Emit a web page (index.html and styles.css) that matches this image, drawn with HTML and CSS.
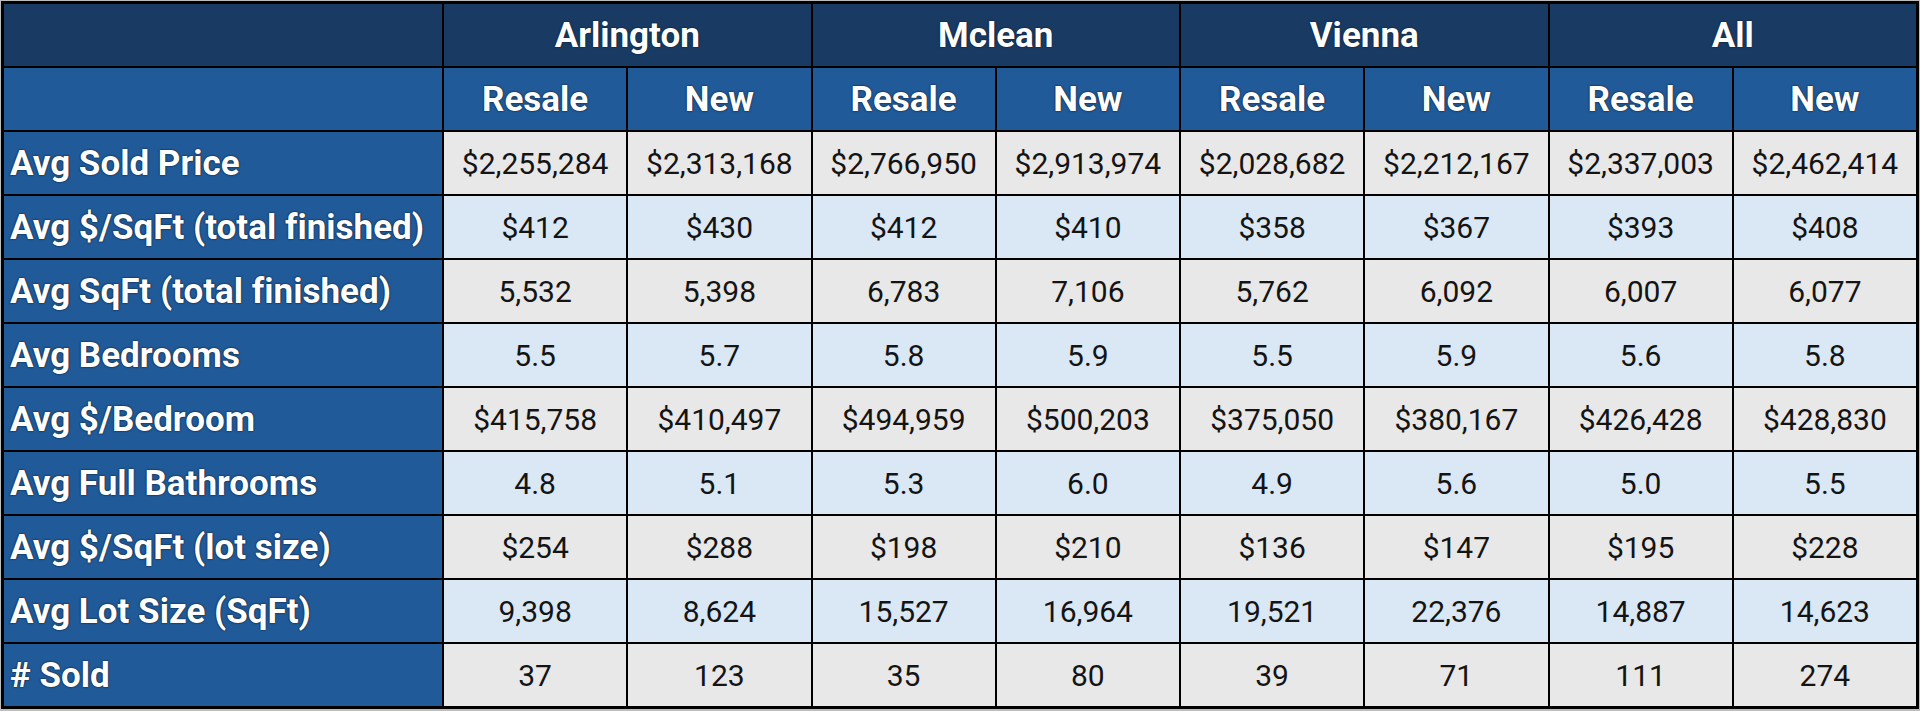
FILE: index.html
```html
<!DOCTYPE html>
<html lang="en">
<head>
<meta charset="utf-8">
<title>Home Sales Comparison</title>
<link rel="stylesheet" href="styles.css">
</head>
<body>
<div class="sheet">
  <div class="cell top corner"></div>
  <div class="cell top city">Arlington</div>
  <div class="cell top city">Mclean</div>
  <div class="cell top city">Vienna</div>
  <div class="cell top city">All</div>

  <div class="cell sub"></div>
  <div class="cell sub">Resale</div><div class="cell sub">New</div>
  <div class="cell sub">Resale</div><div class="cell sub">New</div>
  <div class="cell sub">Resale</div><div class="cell sub">New</div>
  <div class="cell sub">Resale</div><div class="cell sub">New</div>

  <div class="cell label">Avg Sold Price</div>
  <div class="cell d gray">$2,255,284</div><div class="cell d gray">$2,313,168</div>
  <div class="cell d gray">$2,766,950</div><div class="cell d gray">$2,913,974</div>
  <div class="cell d gray">$2,028,682</div><div class="cell d gray">$2,212,167</div>
  <div class="cell d gray">$2,337,003</div><div class="cell d gray">$2,462,414</div>

  <div class="cell label">Avg $/SqFt (total finished)</div>
  <div class="cell d blue">$412</div><div class="cell d blue">$430</div>
  <div class="cell d blue">$412</div><div class="cell d blue">$410</div>
  <div class="cell d blue">$358</div><div class="cell d blue">$367</div>
  <div class="cell d blue">$393</div><div class="cell d blue">$408</div>

  <div class="cell label">Avg SqFt (total finished)</div>
  <div class="cell d gray">5,532</div><div class="cell d gray">5,398</div>
  <div class="cell d gray">6,783</div><div class="cell d gray">7,106</div>
  <div class="cell d gray">5,762</div><div class="cell d gray">6,092</div>
  <div class="cell d gray">6,007</div><div class="cell d gray">6,077</div>

  <div class="cell label">Avg Bedrooms</div>
  <div class="cell d blue">5.5</div><div class="cell d blue">5.7</div>
  <div class="cell d blue">5.8</div><div class="cell d blue">5.9</div>
  <div class="cell d blue">5.5</div><div class="cell d blue">5.9</div>
  <div class="cell d blue">5.6</div><div class="cell d blue">5.8</div>

  <div class="cell label">Avg $/Bedroom</div>
  <div class="cell d gray">$415,758</div><div class="cell d gray">$410,497</div>
  <div class="cell d gray">$494,959</div><div class="cell d gray">$500,203</div>
  <div class="cell d gray">$375,050</div><div class="cell d gray">$380,167</div>
  <div class="cell d gray">$426,428</div><div class="cell d gray">$428,830</div>

  <div class="cell label">Avg Full Bathrooms</div>
  <div class="cell d blue">4.8</div><div class="cell d blue">5.1</div>
  <div class="cell d blue">5.3</div><div class="cell d blue">6.0</div>
  <div class="cell d blue">4.9</div><div class="cell d blue">5.6</div>
  <div class="cell d blue">5.0</div><div class="cell d blue">5.5</div>

  <div class="cell label">Avg $/SqFt (lot size)</div>
  <div class="cell d gray">$254</div><div class="cell d gray">$288</div>
  <div class="cell d gray">$198</div><div class="cell d gray">$210</div>
  <div class="cell d gray">$136</div><div class="cell d gray">$147</div>
  <div class="cell d gray">$195</div><div class="cell d gray">$228</div>

  <div class="cell label">Avg Lot Size (SqFt)</div>
  <div class="cell d blue">9,398</div><div class="cell d blue">8,624</div>
  <div class="cell d blue">15,527</div><div class="cell d blue">16,964</div>
  <div class="cell d blue">19,521</div><div class="cell d blue">22,376</div>
  <div class="cell d blue">14,887</div><div class="cell d blue">14,623</div>

  <div class="cell label"># Sold</div>
  <div class="cell d gray">37</div><div class="cell d gray">123</div>
  <div class="cell d gray">35</div><div class="cell d gray">80</div>
  <div class="cell d gray">39</div><div class="cell d gray">71</div>
  <div class="cell d gray">111</div><div class="cell d gray">274</div>
</div>
</body>
</html>
```

FILE: styles.css
```css
html, body {
  margin: 0;
  padding: 0;
  background: #bdbdbd;
}

body {
  padding: 1px 1px 2px 1px;
  height: 711px;
  box-sizing: border-box;
}

.sheet {
  display: grid;
  grid-template-columns: 438px repeat(8, 1fr);
  grid-auto-rows: 62px;
  gap: 2px;
  background: #000;
  border: 3px solid #000;
  font-variant-ligatures: none;
}

.cell {
  display: flex;
  align-items: center;
  justify-content: center;
  overflow: hidden;
  white-space: nowrap;
}

.top {
  background: #193b63;
  grid-column: span 2;
}

.top.corner {
  grid-column: span 1;
}

.top, .sub, .label {
  color: #fff;
  font-family: Roboto, "Liberation Sans", sans-serif;
  font-weight: 700;
  font-size: 35px;
  text-shadow: 0 0 2px #0a1b33, 0 0 1px #0a1b33;
}

.sub {
  background: #215a98;
}

.label {
  background: #215a98;
  justify-content: flex-start;
  padding-left: 6px;
}

.d {
  font-family: Roboto, "Liberation Sans", sans-serif;
  font-weight: 400;
  font-size: 30px;
  color: #141414;
}

.gray {
  background: #e8e8e8;
}

.blue {
  background: #dae8f6;
}
```
